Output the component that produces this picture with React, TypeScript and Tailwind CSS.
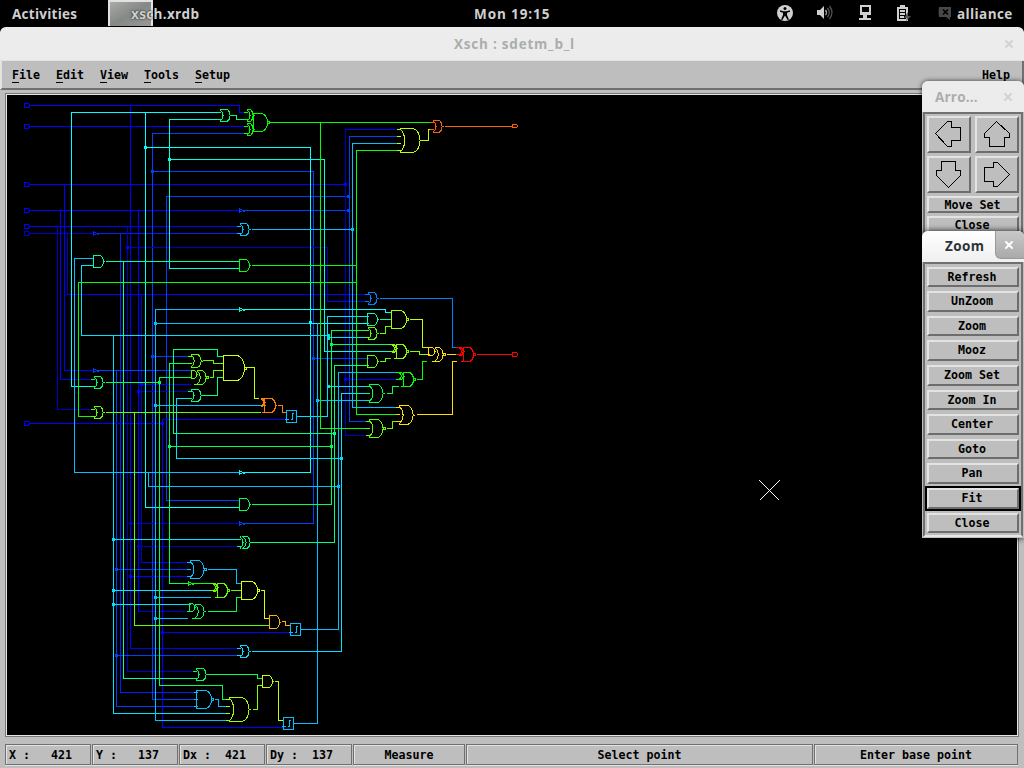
import React from "react";
import { LuX } from "react-icons/lu";

const ui = "font-['Open_Sans','Noto_Sans',sans-serif] font-bold";
const mono = "font-['DejaVu_Sans_Mono','Liberation_Mono',monospace] font-bold text-[11.63px] leading-[14px] text-black whitespace-pre";
const raised = "border-[2px] border-t-[#e3e3e3] border-l-[#e3e3e3] border-b-[#6d6d6d] border-r-[#6d6d6d] bg-[#bebebe]";

const B = "#0000ff", D = "#0000c4", M = "#0020ff", N = "#0040ff", S = "#00c0ff", C = "#00ffff", K = "#00e0ff";
const T = "#00ffe0", A = "#00ffa0", E = "#00ff80", F = "#00ff50", G = "#00ff00", L = "#60ff00", Y = "#c0ff00";
const O = "#ff6000", W = "#ffe000", R = "#ff0000";

const wires: [string, string][] = [
  [B, "30,105 239,105 239,112 243,112"], [B, "30,126 243,126"], [B, "30,184 345,184"],
  [B, "30,210 239,210"], [B, "30,226 239,226"], [D, "30,233 93,233"], [M, "98,233 239,233"],
  [D, "57,226 57,409 93,409"], [B, "60,210 60,379 93,379"], [B, "64,184 64,370 93,370"],
  [D, "67,233 67,294"], [B, "67,294 368,294"], [M, "120,233 120,692 195,692"],
  [D, "127,226 127,671 195,671"], [B, "130,105 130,648 239,648"], [B, "138,210 138,611"],
  [D, "138,611 187,611"], [D, "141,294 141,562"], [B, "141,562 187,562"],
  [N, "243,133 152,133 152,699 195,699"], [N, "152,171 313,171 313,523 245,523"],
  [D, "127,247 327,247 327,301"], [B, "327,301 368,301"], [N, "348,196 166,196 166,500 239,500"],
  [N, "245,210 348,210"], [N, "98,370 190,370"], [N, "116,370 116,706 195,706"],
  [N, "152,356 190,356"], [B, "141,384 190,384"], [D, "138,391 190,391"],
  [B, "30,423 162,423"], [B, "286,419 162,419 162,727 283,727"], [D, "130,523 239,523"],
  [D, "138,546 239,546"], [B, "130,576 187,576"], [N, "116,569 187,569"], [B, "162,632 290,632"],
  [N, "116,655 239,655"], [D, "396,129 345,129 345,435 368,435"], [B, "345,129 396,129"],
  [N, "396,136 349,136 349,421 368,421"], [B, "345,379 398,379"], [N, "313,358 368,358"],
  [C, "219,112 71,112 71,386 93,386"], [C, "145,112 145,507 239,507"],
  [C, "145,147 310,147 310,472 245,472"], [S, "93,258 74,258 74,472 239,472"],
  [K, "93,265 81,265 81,335 328,335"], [K, "113,335 113,713 229,713"],
  [T, "219,119 169,119 169,268 239,268"], [T, "169,159 324,159 324,351 389,351"],
  [S, "252,229 352,229"], [S, "396,143 352,143 352,407 398,407"],
  [S, "239,309 155,309 155,720 229,720"], [S, "155,323 317,323"], [C, "310,323 368,323"],
  [C, "245,309 385,309 385,312 391,312"], [K, "299,416 327,416 327,316 368,316"],
  [K, "328,337 368,337"], [K, "328,386 368,386"], [S, "317,323 317,723 296,723"],
  [S, "317,400 368,400"], [S, "398,372 338,372 338,629 303,629"],
  [K, "368,393 341,393 341,651 252,651"], [K, "190,398 176,398 176,458 341,458"],
  [S, "155,405 260,405"], [S, "148,472 148,486 338,486"], [K, "113,539 239,539"],
  [K, "113,590 210,590"], [K, "113,604 187,604"], [S, "155,597 210,597"], [S, "155,618 187,618"],
  [S, "208,569 236,569 236,583 241,583"], [S, "215,699 218,699 218,706 229,706"],
  [G, "270,122 432,122"], [G, "320,122 320,428 368,428"], [G, "396,150 356,150 356,414 398,414"],
  [G, "252,265 355,265"], [G, "355,282 78,282 78,416 93,416"], [A, "106,261 239,261"],
  [A, "123,261 123,678 195,678"], [F, "106,382 159,382"],
  [F, "190,377 159,377 159,685 222,685 222,699 229,699"], [L, "106,412 260,412"],
  [L, "134,412 134,625 269,625"], [F, "190,363 169,363 169,583 188,583"],
  [E, "334,433 173,433 173,349 217,349 217,356 223,356"], [F, "169,446 331,446"],
  [F, "368,330 331,330 331,504 252,504"], [F, "331,344 390,344"],
  [E, "368,365 334,365 334,542 252,542"], [E, "232,115 236,115 236,119 243,119"],
  [L, "203,360 213,360 213,363 223,363"], [L, "210,377 213,377 213,370 223,370"],
  [E, "203,395 217,395 217,377 223,377"], [Y, "247,367 254,367 254,398 258,398"],
  ["#ff8000", "278,405 282,405 282,412 286,412"], ["#0080ff", "380,298 452,298 452,347 458,347"],
  [A, "380,319 391,319"], [L, "380,333 385,333 385,326 391,326"],
  [Y, "410,319 422,319 422,347 426,347"], ["#80ff00", "410,351 419,351 419,354 426,354"],
  [L, "380,361 385,361 385,358 390,358"], [G, "417,379 422,379 422,361 426,361"],
  [F, "387,393 392,393 392,386 398,386"], [W, "417,414 452,414 452,361 456,361"],
  [L, "387,428 392,428 392,421 398,421"], [W, "447,354 456,354"], [R, "477,354 512,354"],
  [Y, "421,140 428,140 428,129 432,129"], [O, "445,126 512,126"],
  [G, "193,583 210,583"], [L, "231,590 241,590"], [F, "208,611 236,611 236,597 241,597"],
  ["#e0ff00", "261,590 264,590 264,618 269,618"], ["#ffb000", "282,621 285,621 285,625 290,625"],
  [F, "208,674 257,674 257,678 262,678"], [Y, "275,681 278,681 278,720 283,720"],
  ["#80ff00", "253,709 257,709 257,685 262,685"],
];

const dots: [number, number, string][] = [
  [145, 147, C], [169, 159, T], [152, 171, N], [345, 184, B], [348, 196, N], [348, 210, N],
  [352, 229, S], [127, 247, B], [155, 323, S], [310, 322, C],
  [328, 335, K], [328, 338, K], [331, 344, F], [152, 356, N], [313, 358, N], [345, 379, B],
  [159, 382, F], [328, 386, K], [317, 400, S], [155, 405, S], [141, 384, B], [138, 391, B],
  [162, 423, B], [334, 433, E], [169, 446, F], [331, 446, F], [341, 458, K], [338, 486, S],
  [130, 523, D], [113, 539, K], [138, 546, D], [116, 569, N], [130, 576, B], [113, 590, K],
  [155, 597, S], [113, 604, K], [155, 618, S], [162, 632, B], [116, 655, N],
];

type Kind = "and" | "or" | "xor";
// kind, left, top, width, height, colour, output bubble, input rows
const gates: [Kind, number, number, number, number, string, boolean, number[]][] = [
  ["or", 219, 109, 11, 12, E, false, [112, 119]], ["or", 246, 109, 7, 12, G, false, [112, 119]],
  ["or", 246, 123, 7, 12, G, false, [126, 133]], ["and", 253, 113, 14, 18, G, true, []],
  ["or", 399, 128, 21, 24, Y, false, [129, 136, 143, 150]], ["or", 432, 120, 10, 12, O, false, [122, 129]],
  ["and", 93, 255, 10, 12, A, false, []], ["or", 239, 223, 10, 12, S, false, [226, 233]],
  ["and", 239, 259, 10, 12, G, false, []], ["or", 93, 376, 10, 12, F, false, [379, 386]],
  ["or", 93, 406, 10, 12, L, false, [409, 416]], ["or", 190, 354, 11, 13, L, false, [356, 363]],
  ["and", 191, 370, 5, 8, L, false, []], ["or", 196, 370, 10, 14, L, true, [384]],
  ["or", 190, 389, 11, 12, E, false, [391, 398]], ["and", 223, 355, 21, 25, "#d0ff00", true, []],
  ["or", 260, 398, 4, 8, "#ff8000", false, []], ["and", 264, 398, 11, 14, "#ff8000", false, [398, 405, 412]],
  ["or", 367, 292, 10, 12, "#0080ff", false, [294, 301]], ["and", 367, 313, 10, 12, A, false, []],
  ["or", 367, 327, 10, 12, L, false, [330, 337]], ["and", 391, 310, 15, 18, "#a0ff00", true, []],
  ["or", 391, 344, 5, 8, "#80ff00", false, [344, 351]], ["and", 396, 344, 10, 14, "#80ff00", true, [358]],
  ["and", 367, 355, 10, 12, L, false, []], ["or", 398, 372, 5, 7, G, false, [372, 379]],
  ["and", 403, 372, 10, 14, G, true, [386]], ["or", 368, 384, 15, 18, F, false, [386, 393, 400]],
  ["or", 398, 405, 15, 19, W, false, [407, 414, 421]], ["or", 368, 419, 15, 18, L, true, [421, 428, 435]],
  ["and", 428, 347, 6, 8, W, false, [347, 354]], ["or", 434, 347, 9, 14, W, true, [361]],
  ["or", 458, 347, 5, 8, R, false, [347, 354]], ["and", 463, 347, 10, 14, R, true, [361]],
  ["and", 239, 498, 10, 12, F, false, []], ["xor", 239, 536, 11, 12, E, false, [539, 546]],
  ["or", 189, 560, 15, 18, S, true, [562, 569, 576]], ["or", 212, 583, 5, 8, L, false, [583, 590]],
  ["and", 217, 583, 10, 14, L, true, [597]], ["and", 189, 603, 5, 8, F, false, [604, 611]],
  ["or", 194, 604, 10, 14, F, false, [618]], ["and", 241, 581, 16, 18, "#e0ff00", true, []],
  ["and", 269, 615, 10, 13, "#ffb000", false, []], ["or", 239, 645, 10, 12, K, false, [648, 655]],
  ["or", 195, 668, 11, 12, F, false, [671, 678]], ["and", 262, 675, 10, 12, Y, false, []],
  ["and", 196, 690, 15, 18, S, true, [692, 699, 706]], ["or", 228, 697, 21, 24, "#a0ff00", false, [699, 706, 713, 720]],
];

function Gate({ g }: { g: (typeof gates)[number] }) {
  const [kind, x, y, width, h, color, bubble, inputs] = g;
  const w = kind === "and" ? width : width - 0.4;
  const rx = Math.min(h / 3, w * 0.6);
  const flat = x + w - rx;
  const nose = `H${flat}A${rx} ${h / 2} 0 0 1 ${x + w} ${y + h / 2}A${rx} ${h / 2} 0 0 1 ${flat} ${y + h}`;
  const left = kind === "xor" ? x + 2 : x;
  let d = `M${left} ${y}${nose}H${left}`;
  if (kind === "and") d += "Z";
  else d += `M${x + 0.6} ${y}q${2 + h * 0.32} ${h / 2} 0 ${h}`;
  if (kind === "xor") d += `M${x + 3.6} ${y}q6 ${h / 2} 0 ${h}`;
  const right = x + width;
  const mid = y + h / 2;
  d += bubble ? `M${right} ${mid - 1}h2v2h-2z` : `M${right} ${mid}h1`;
  inputs.forEach((row) => { d += `M${x - 3} ${row}h4`; });
  return <path d={d} stroke={color} />;
}

function Schematic() {
  return (
    <svg className="block" width="1010" height="640" viewBox="7 95 1010 640" fill="none" strokeWidth="1" shapeRendering="crispEdges">
      <g transform="translate(0.5 0.5)">
        {wires.map(([c, p], i) => <polyline key={i} points={p} stroke={c} strokeLinecap="square" />)}
        {dots.map(([x, y, c], i) => <rect key={i} x={x - 1.5} y={y - 1.5} width="3" height="3" fill={c} />)}
        {gates.map((g, i) => <Gate key={i} g={g} />)}
        {[105, 126, 184, 210, 226, 233, 423].map((y) => (
          <path key={y} d={`M24 ${y - 2}h4l1 1v2h-1v1h-4z`} stroke={y === 233 ? D : B} />
        ))}
        <path d="M512 124h4l1 1v1l-1 1h-4z" stroke={O} />
        <path d="M512 352h4l1 1v2l-1 1h-4z" stroke={R} />
        {([[93, 233, M], [93, 370, N], [239, 210, N], [239, 309, T], [239, 472, C], [239, 523, N], [188, 583, G]] as [number, number, string][]).map(([x, y, c]) => (
          <g key={`${x}-${y}`} fill={c}>
            <rect x={x - 0.5} y={y - 2.5} width="1" height="5" />
            <rect x={x + 0.5} y={y - 1.5} width="2" height="1" />
            <rect x={x + 0.5} y={y + 0.5} width="2" height="1" />
            <rect x={x + 2.5} y={y - 0.5} width="3" height="1" />
            <rect x={x + 3.5} y={y + 0.5} width="2" height="1" />
          </g>
        ))}
        {[[286, 410], [290, 623], [283, 717]].map(([x, y]) => (
          <g key={x}>
            <path d={`M${x} ${y}h10v12h-10zM${x - 2} ${y + 9}h4M${x + 10} ${y + 6}h2`} stroke={S} />
            <g fill={S}>
              <rect x={x + 5.5} y={y + 2.5} width="2" height="1" />
              <rect x={x + 5.5} y={y + 2.5} width="1" height="7" />
              <rect x={x + 4.5} y={y + 8.5} width="2" height="1" />
            </g>
          </g>
        ))}
        <path d="M759 480L779 500M779 480L759 500" stroke="#fff" />
      </g>
    </svg>
  );
}

function TopBar() {
  return (
    <header className={`${ui} grid h-[27px] grid-cols-[108px_366px_303px_1fr] items-center bg-black text-[13.5px] text-[#cfcfcf]`}>
      <span className="pl-[12px] pt-[2px] tracking-[0.26px]">Activities</span>
      <div className="flex h-full items-center">
        <div className="-mr-[22px] h-[26px] w-[45px] self-start border-2 border-b-0 border-[#e2e2e2] bg-linear-to-br from-[#aaa] via-[#858985] to-[#999]" />
        <span className="relative pt-[2px] tracking-[0.35px] [text-shadow:0_0_2px_#000]">xsch.xrdb</span>
      </div>
      <span className="pt-[1px] tracking-[0.9px]">Mon 19:15</span>
      <div className="flex items-center">
        <svg width="180" height="27" viewBox="777 0 180 27" fill="#d0d0d0">
          <circle cx="785" cy="13" r="8" />
          <circle cx="785" cy="8.5" r="1.5" fill="#000" />
          <path d="M780 10.2l3.5 1h3l3.5-1v1.5l-3 1v2.3l2 4.5-1.4.5-2.6-4.5-2.6 4.5-1.4-.5 2-4.5v-2.3l-3-1z" fill="#000" />
          <path d="M817 10h3l4-4v13l-4-4h-3z" />
          <path d="M825.5 10q2 2.5 0 5" fill="none" stroke="#aaa" strokeWidth="1.3" />
          <path d="M827.5 8q3.5 4.5 0 9M829.5 6q5 6.500 0 13" fill="none" stroke="#555" strokeWidth="1.3" />
          <path d="M860 5h11v10h-4v3h4v2h-12v-2h4v-3h-3zM862 7v5h7V7z" fillRule="evenodd" />
          <path d="M900 5h5v2h3v14h-11V7h3zM899 9v10h7V9zM900 10h5v2h-5zM900 13h5v2h-5zM900 16h4v2h-4z" fillRule="evenodd" />
          <path d="M908 12l-4 6h3l-1 3 5-5h-3z" fill="#555" />
          <path d="M939 7h12v10h-1v3l-4-3h-7q-1-5 0-10z" fill="#484848" />
          <path d="M943 9.500l5 5M948 9.500l-5 5" stroke="#000" strokeWidth="1.7" />
        </svg>
        <span className="pt-[2px] tracking-[0.4px]">alliance</span>
      </div>
    </header>
  );
}

function ArrowButton({ d }: { d: string }) {
  return (
    <button className={`${raised} flex h-[37px] items-center justify-center pb-[1px] pr-[2px]`}>
      <svg className="shrink-0" width="28" height="28" viewBox="0 0 28 28" fill="none" stroke="#000" shapeRendering="crispEdges"><path d={d} /></svg>
    </button>
  );
}

const frame = "border-2 border-t-[#707070] border-l-[#707070] border-r-[#707070] border-b-[#e5e5e5]";

function ArrowsWindow() {
  return (
    <section className="absolute left-[922px] top-[81px] h-[156px] w-[102px] overflow-hidden rounded-t-[6px] bg-[#bebebe] shadow-[0_0_5px_rgba(0,0,0,0.7)]">
      <div className={`${ui} flex h-[31px] items-center bg-[#ececec] pl-[13px] text-[13.5px] text-[#abaeab]`}>
        <span className="w-[67px] pt-[1px] tracking-[0.2px]">Arro...</span><LuX size={12} strokeWidth={4} color="#d3d3d3" />
      </div>
      <div className={`${frame} ml-[1px] mr-[1px] flex h-[150px] flex-col gap-[3px] px-[2px] pt-[2px]`}>
        <div className="grid grid-cols-[44px_44px] gap-x-[4px] gap-y-[3px]">
          <ArrowButton d="M1.500 13.500L13.500 1.500H17.500V7.500H26.500V20.500H17.500V26.500H13.500Z" />
          <ArrowButton d="M14.500 1.500L27.500 13.500V17.500H22.500V26.500H7.500V17.500H2.500V13.500Z" />
          <ArrowButton d="M14.500 27.500L2.500 15.500V10.500H7.500V1.500H21.500V10.500H26.500V15.500Z" />
          <ArrowButton d="M27.500 14.500L15.500 26.500H11.500V21.500H2.500V7.500H11.500V2.500H15.500Z" />
        </div>
        <button className={`${raised} ${mono} flex h-[17px] items-center justify-center pr-[1px]`}>Move Set</button>
        <button className={`${raised} ${mono} flex h-[18px] items-center justify-center pr-[2px]`}>Close</button>
      </div>
    </section>
  );
}

const zoomItems = ["Refresh", "UnZoom", "Zoom", "Mooz", "Zoom Set", "Zoom In", "Center", "Goto", "Pan", "Fit", "Close"];

function ZoomWindow() {
  return (
    <section className="absolute left-[922px] top-[231px] h-[307px] w-[102px] rounded-t-[6px] bg-[#bebebe] shadow-[0_0_6px_rgba(0,0,0,0.9)]">
      <div className={`${ui} flex h-[31px] rounded-t-[6px] bg-linear-to-b from-white to-[#efefef] text-[13.5px] text-[#2e3436]`}>
        <span className="w-[73px] pl-[23px] leading-[31px] tracking-[0.4px]">Zoom</span>
        <div className="flex h-[28px] flex-1 items-center justify-center rounded-bl-[6px] rounded-tr-[6px] border-b border-l border-[#999] bg-linear-to-b from-[#c8c8c8] to-[#aaa] pr-[2px]">
          <LuX size={12} strokeWidth={4} color="#fff" />
        </div>
      </div>
      <div className={`${frame} ml-[1px] mr-[1px] flex h-[275px] flex-col gap-[4.600px] px-[2px] pt-[2.700px]`}>
        {zoomItems.map((name) => (
          <button key={name} className={`${raised} ${mono} -mb-[0.500px] flex h-[20.500px] shrink-0 items-center justify-center pb-[0.500px] pr-[2px] ${name === "Fit" ? "outline-2 outline-black" : ""}`}>{name}</button>
        ))}
      </div>
    </section>
  );
}

const status: [string, string][] = [
  ["w-[86px]", "X :   421"], ["w-[86px]", "Y :   137"], ["w-[86px]", "Dx :  421"], ["w-[86px]", "Dy :  137"],
  ["w-[112px]", "Measure"], ["w-[347px]", "Select point"], ["w-[204px]", "Enter base point"],
];

export default function App() {
  return (
    <div className="relative h-[768px] w-[1024px] overflow-hidden bg-black">
      <TopBar />
      <main className="flex h-[741px] flex-col overflow-hidden rounded-t-[6px] bg-[#bebebe]">
        <div className={`${ui} relative flex h-[34px] items-center justify-center rounded-t-[6px] border-b border-[#e2e2e2] bg-[#ececec] pl-[5px] text-[13.5px] text-[#abaeab]`}>
          <span className="pt-[2px] tracking-[0.78px]">Xsch : sdetm_b_l</span>
          <LuX className="absolute right-[9px] top-[11px]" size={12} strokeWidth={4} color="#d3d3d3" />
        </div>
        <nav className={`${mono} flex h-[29px] items-center gap-[16px] border-b-2 border-l-2 border-r-2 border-b-[#707070] border-l-[#e3e3e3] border-r-[#707070] pl-[10px] pr-[12px]`}>
          {["File", "Edit", "View", "Tools", "Setup"].map((m) => (
            <span key={m}><span className="border-b border-black">{m[0]}</span>{m.slice(1)}</span>
          ))}
          <span className="ml-auto"><span className="border-b border-black">H</span>elp</span>
        </nav>
        <div className="ml-[5px] mt-[3px] h-[644px] w-[1014px] border-2 border-[#e5e5e5] bg-black outline-1 -outline-offset-1 outline-[#777]">
          <Schematic />
        </div>
        <footer className={`${mono} ml-[5px] mt-[7px] flex h-[21px] gap-[1px]`}>
          {status.map(([w, t], i) => (
            <div key={t} className={`${w} flex shrink-0 items-center border border-[#707070] shadow-[inset_1px_1px_0_#e3e3e3,0_1px_0_#e3e3e3] ${i < 4 ? "pl-[3px]" : "justify-center"}`}>{t}</div>
          ))}
        </footer>
      </main>
      <ArrowsWindow />
      <ZoomWindow />
    </div>
  );
}
